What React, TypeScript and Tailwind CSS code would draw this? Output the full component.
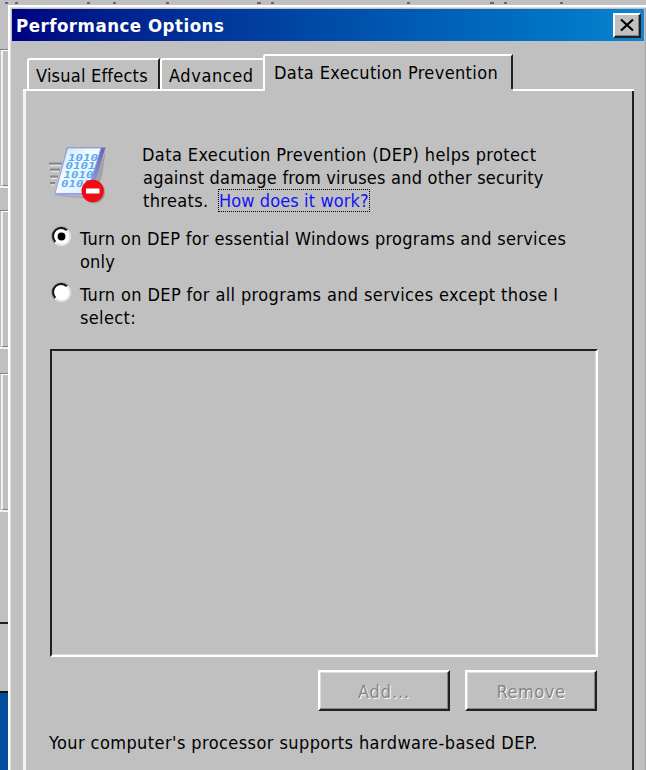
import React from 'react';

const font = "font-['DejaVu_Sans_Condensed','DejaVu_Sans',sans-serif] [font-stretch:condensed]";

function Line({ children, className = '' }: { children: React.ReactNode; className?: string }) {
  return <div className={`whitespace-nowrap ${className}`}>{children}</div>;
}

function ProgramIcon() {
  return (
    <svg width="60" height="62" viewBox="0 0 60 62" className="block">
      <defs>
        <linearGradient id="page" x1="0" y1="0" x2="1" y2="1">
          <stop offset="0" stopColor="#c4e4ff" />
          <stop offset="0.45" stopColor="#f4fbff" />
          <stop offset="1" stopColor="#c9e8ff" />
        </linearGradient>
        <linearGradient id="edge" x1="0" y1="0" x2="0" y2="1">
          <stop offset="0" stopColor="#6466b0" />
          <stop offset="1" stopColor="#a3a4e4" />
        </linearGradient>
      </defs>
      <path d="M7 52L39 54L57 7L53 33L44 56L10 53Z" fill="#77777f" opacity=".4" />
      <path d="M18 4.500H56.500L42 52.500H5.500Z" fill="url(#edge)" />
      <path d="M18.500 5H52L38 50.500H6Z" fill="url(#page)" stroke="#93a8de" strokeWidth="1" />
      <path d="M0 20.500H13M1 26.500H11M1 33.500H9M1 40H6" stroke="#85898c" strokeWidth="1.800" />
      <path d="M1 22.500H12M2 28.500H10M2 35.500H8M2 42H5.500" stroke="#e6ebeb" strokeWidth="1.200" />
      <g fill="#5aaaf2" fontFamily="DejaVu Sans Mono" fontWeight="bold" fontSize="9" fontStyle="italic">
        <text x="19" y="17.700" textLength="30" lengthAdjust="spacingAndGlyphs">1010</text>
        <text x="16.500" y="26.300" textLength="30" lengthAdjust="spacingAndGlyphs">0101</text>
        <text x="14.500" y="35" textLength="30" lengthAdjust="spacingAndGlyphs">1010</text>
        <text x="12" y="43.600" textLength="30" lengthAdjust="spacingAndGlyphs">0101</text>
      </g>
      <circle cx="45" cy="49.500" r="11" fill="#777" opacity=".5" />
      <circle cx="43.700" cy="48" r="11.200" fill="#f00c14" />
      <rect x="37" y="45.500" width="13.500" height="5" fill="#fff" />
    </svg>
  );
}

function Radio({ checked = false }: { checked?: boolean }) {
  return (
    <svg width="21" height="21" viewBox="0 0 20 20" className="block shrink-0">
      <circle cx="10" cy="10" r="9" fill="#fff" />
      <path d="M3.600 16.400A9 9 0 0 1 16.400 3.600" fill="none" stroke="#888" strokeWidth="1.400" />
      <path d="M4.200 15A7.500 7.500 0 0 1 15 4.200" fill="none" stroke="#111" strokeWidth="1.900" />
      <path d="M16 5A7.500 7.500 0 0 1 5 16" fill="none" stroke="#dedede" strokeWidth="1.500" />
      {checked && <circle cx="10" cy="10" r="3.700" fill="#000" />}
    </svg>
  );
}

function PushButton({ label, spacing }: { label: string; spacing: string }) {
  return (
    <button className="flex h-[41px] w-[132px] items-center justify-center border-2 border-t-white border-l-white border-r-[#202020] border-b-[#202020] pt-[2px] shadow-[inset_-1px_-1px_#858585,inset_1px_1px_#dcdcdc] text-[#858585] [text-shadow:1px_1px_#fff]">
      <span className={`whitespace-nowrap ${spacing}`}>{label}</span>
    </button>
  );
}

function GroupEdge() {
  return (
    <div className="h-[139px] shrink-0 border-t border-b-2 border-t-[#808080] border-b-[#f0f0f0]">
      <div className="ml-[1px] h-full border-t border-b border-l-2 border-t-white border-b-[#808080] border-l-[#f0f0f0]" />
    </div>
  );
}

const behindMarks = [5, 15, 87, 113, 166, 257, 271, 407, 490, 504, 560];

export default function App() {
  return (
    <div className={`flex h-[770px] w-[646px] flex-col overflow-hidden bg-[#c0c0c0] text-[18px] leading-[23px] text-black ${font}`}>
      <svg width="646" height="5" className="block shrink-0">
        {behindMarks.map((x) => <rect key={x} x={x} y="2" width={x === 257 || x === 490 ? 4 : 3} height="2" fill="#6a6570" />)}
      </svg>
      <div className="flex min-h-0 flex-1">
        <div className="flex w-[8px] shrink-0 flex-col">
          <div className="h-[44px]" />
          <GroupEdge />
          <div className="h-[22px]" />
          <GroupEdge />
          <div className="h-[24px]" />
          <GroupEdge />
          <div className="h-[112px] border-b-2 border-b-[#202020]" />
          <div className="h-[69px] border-b-2 border-b-[#101010]" />
          <div className="flex-1 bg-[#00509b]" />
        </div>
        <div className="flex min-w-0 flex-1 flex-col border-t-2 border-l-2 border-white pt-[2px] pl-[2px] shadow-[inset_1px_1px_#dcdcdc,inset_-1px_0_#a8a8a8]">
          <div className="flex h-[32px] w-[632px] shrink-0 items-center justify-between bg-linear-to-r from-[#000080] to-[#1084d0] pr-[3px] pl-[4px]">
            <span className="whitespace-nowrap text-[18.500px] font-bold tracking-[0.500px] text-white">Performance Options</span>
            <button className="flex h-[25px] w-[28px] items-center justify-center border-2 border-t-white border-l-white border-r-[#202020] border-b-[#202020] bg-[#c0c0c0] shadow-[inset_-1px_-1px_#808080]">
              <svg width="16" height="14" viewBox="0 0 16 14"><path d="M2 1.500L14 12.500M14 1.500L2 12.500" stroke="#000" strokeWidth="2.200" /></svg>
            </button>
          </div>
          <div className="flex h-[48px] shrink-0 items-end pl-[15px]">
            <div className="h-[31px] w-[133px] rounded-tl-[3px] border-t-2 border-r-2 border-l-2 border-t-white border-l-white border-r-[#202020] pt-[4px] pl-[7px]"><Line className="tracking-[0.220px]">Visual Effects</Line></div>
            <div className="h-[31px] w-[103px] rounded-tl-[3px] border-t-2 border-l-2 border-white pt-[4px] pl-[7px]"><Line className="tracking-[0.590px]">Advanced</Line></div>
            <div className="h-[35px] w-[250px] rounded-tl-[3px] border-t-2 border-r-2 border-l-2 border-t-white border-l-white border-r-[#202020] pt-[5px] pl-[9px]"><Line className="tracking-[0.370px]">Data Execution Prevention</Line></div>
          </div>
          <div className="flex">
            <div className="ml-[11px] h-[2px] w-[242px] bg-white" />
            <div className="h-[2px] w-[248px]" />
            <div className="h-[2px] w-[121px] bg-white" />
          </div>
          <div className="ml-[11px] flex w-[611px] flex-1 flex-col border-r-2 border-l-[3px] border-l-[#f4f4f4] border-r-[#202020] pl-[23px]">
            <div className="flex pt-[52px]">
              <div className="h-[83px] w-[93px] shrink-0"><ProgramIcon /></div>
              <div>
                <Line className="tracking-[0.390px]">Data Execution Prevention (DEP) helps protect</Line>
                <Line className="pl-[1px] tracking-[0.220px]">against damage from viruses and other security</Line>
                <div className="flex whitespace-nowrap">
                  <span className="w-[77px] pl-[1px] tracking-[0.350px]">threats.</span>
                  <a className="mt-[1px] h-[21px] w-[150px] leading-[21px] tracking-[0.100px] text-[#1414f5] outline-1 outline-dotted outline-black">How does it work?</a>
                </div>
              </div>
            </div>
            <div className="flex h-[56px] gap-[8px] pl-[2px]">
              <Radio checked />
              <div className="pt-[1px]"><Line className="tracking-[0.310px]">Turn on DEP for essential Windows programs and services</Line><Line className="tracking-[0.200px]">only</Line></div>
            </div>
            <div className="flex h-[67px] gap-[8px] pl-[2px]">
              <Radio />
              <div className="pt-[1px]"><Line className="tracking-[0.370px]">Turn on DEP for all programs and services except those I</Line><Line className="tracking-[0.350px]">select:</Line></div>
            </div>
            <div className="ml-[1px] h-[308px] w-[548px] shrink-0 border-2 border-t-[#202020] border-r-white border-b-white border-l-[#202020] shadow-[inset_-1px_-1px_#dcdcdc]" />
            <div className="flex gap-[15px] pt-[13px] pl-[269px]">
              <PushButton label="Add..." spacing="tracking-[0.900px]" />
              <PushButton label="Remove" spacing="tracking-[0.600px]" />
            </div>
            <Line className="pt-[20px] tracking-[0.420px]">Your computer's processor supports hardware-based DEP.</Line>
          </div>
        </div>
      </div>
    </div>
  );
}
